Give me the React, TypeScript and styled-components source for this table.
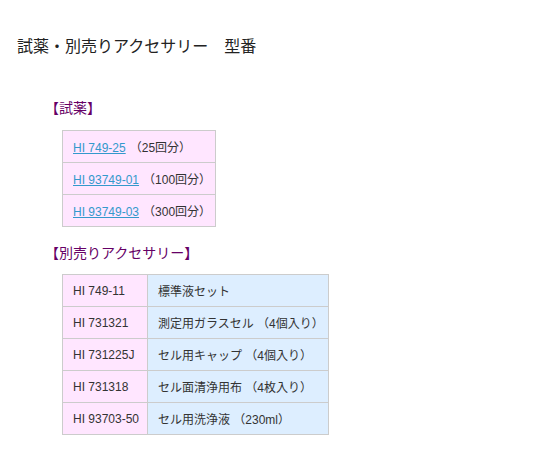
import styled, { createGlobalStyle } from "styled-components"

const Global = createGlobalStyle`
    body {
        margin: 0;
        background: #FFFFFF;
        font-family: "Liberation Sans", "Noto Sans CJK JP", sans-serif;
        color: #333333;
    }
`

const Page = styled.div`
    padding: 36px 0 0 17px;
`

const Title = styled.h1`
    margin: 0;
    font-size: 16px;
    line-height: 22px;
    font-weight: normal;
    color: #222222;
`

const Section = styled.section`
    padding-left: 28px;
`

const Heading = styled.h2<{ $top: number }>`
    margin: ${p => p.$top}px 0 0 0;
    font-size: 14px;
    line-height: 18px;
    font-weight: normal;
    color: #660066;
`

const Table = styled.table<{ $width: number; $gap: number }>`
    margin: ${p => p.$gap}px 0 0 17px;
    width: ${p => p.$width}px;
    table-layout: fixed;
    border-collapse: collapse;
    font-size: 12px;
`

const Cell = styled.td<{ $tone: "pink" | "blue"; $width?: number }>`
    height: 32px;
    padding: 0 10px;
    box-sizing: border-box;
    border: 1px solid #CCCCCC;
    background: ${p => (p.$tone === "pink" ? "#FFE6FF" : "#DDEEFF")};
    width: ${p => (p.$width ? `${p.$width}px` : "auto")};
    white-space: nowrap;
    overflow: hidden;
    color: #333333;
`

const ModelLink = styled.a`
    color: #3399CC;
    text-decoration: underline;
    margin-right: 4px;
`

const reagents = [
    { model: "HI 749-25", note: "（25回分）" },
    { model: "HI 93749-01", note: "（100回分）" },
    { model: "HI 93749-03", note: "（300回分）" },
]

const accessories = [
    { model: "HI 749-11", name: "標準液セット" },
    { model: "HI 731321", name: "測定用ガラスセル （4個入り）" },
    { model: "HI 731225J", name: "セル用キャップ （4個入り）" },
    { model: "HI 731318", name: "セル面清浄用布 （4枚入り）" },
    { model: "HI 93703-50", name: "セル用洗浄液 （230ml）" },
]

export default function App() {
    return <Page>
        <Global />
        <Title>試薬・別売りアクセサリー　型番</Title>
        <Section>
            <Heading $top={41}>【試薬】</Heading>
            <Table $width={154} $gap={13}>
                <tbody>
                    {reagents.map(r => <tr key={r.model}>
                        <Cell $tone="pink">
                            <ModelLink href="#">{r.model}</ModelLink>{r.note}
                        </Cell>
                    </tr>)}
                </tbody>
            </Table>
            <Heading $top={17}>【別売りアクセサリー】</Heading>
            <Table $width={267} $gap={12}>
                <tbody>
                    {accessories.map(a => <tr key={a.model}>
                        <Cell $tone="pink" $width={85}>{a.model}</Cell>
                        <Cell $tone="blue">{a.name}</Cell>
                    </tr>)}
                </tbody>
            </Table>
        </Section>
    </Page>
}
